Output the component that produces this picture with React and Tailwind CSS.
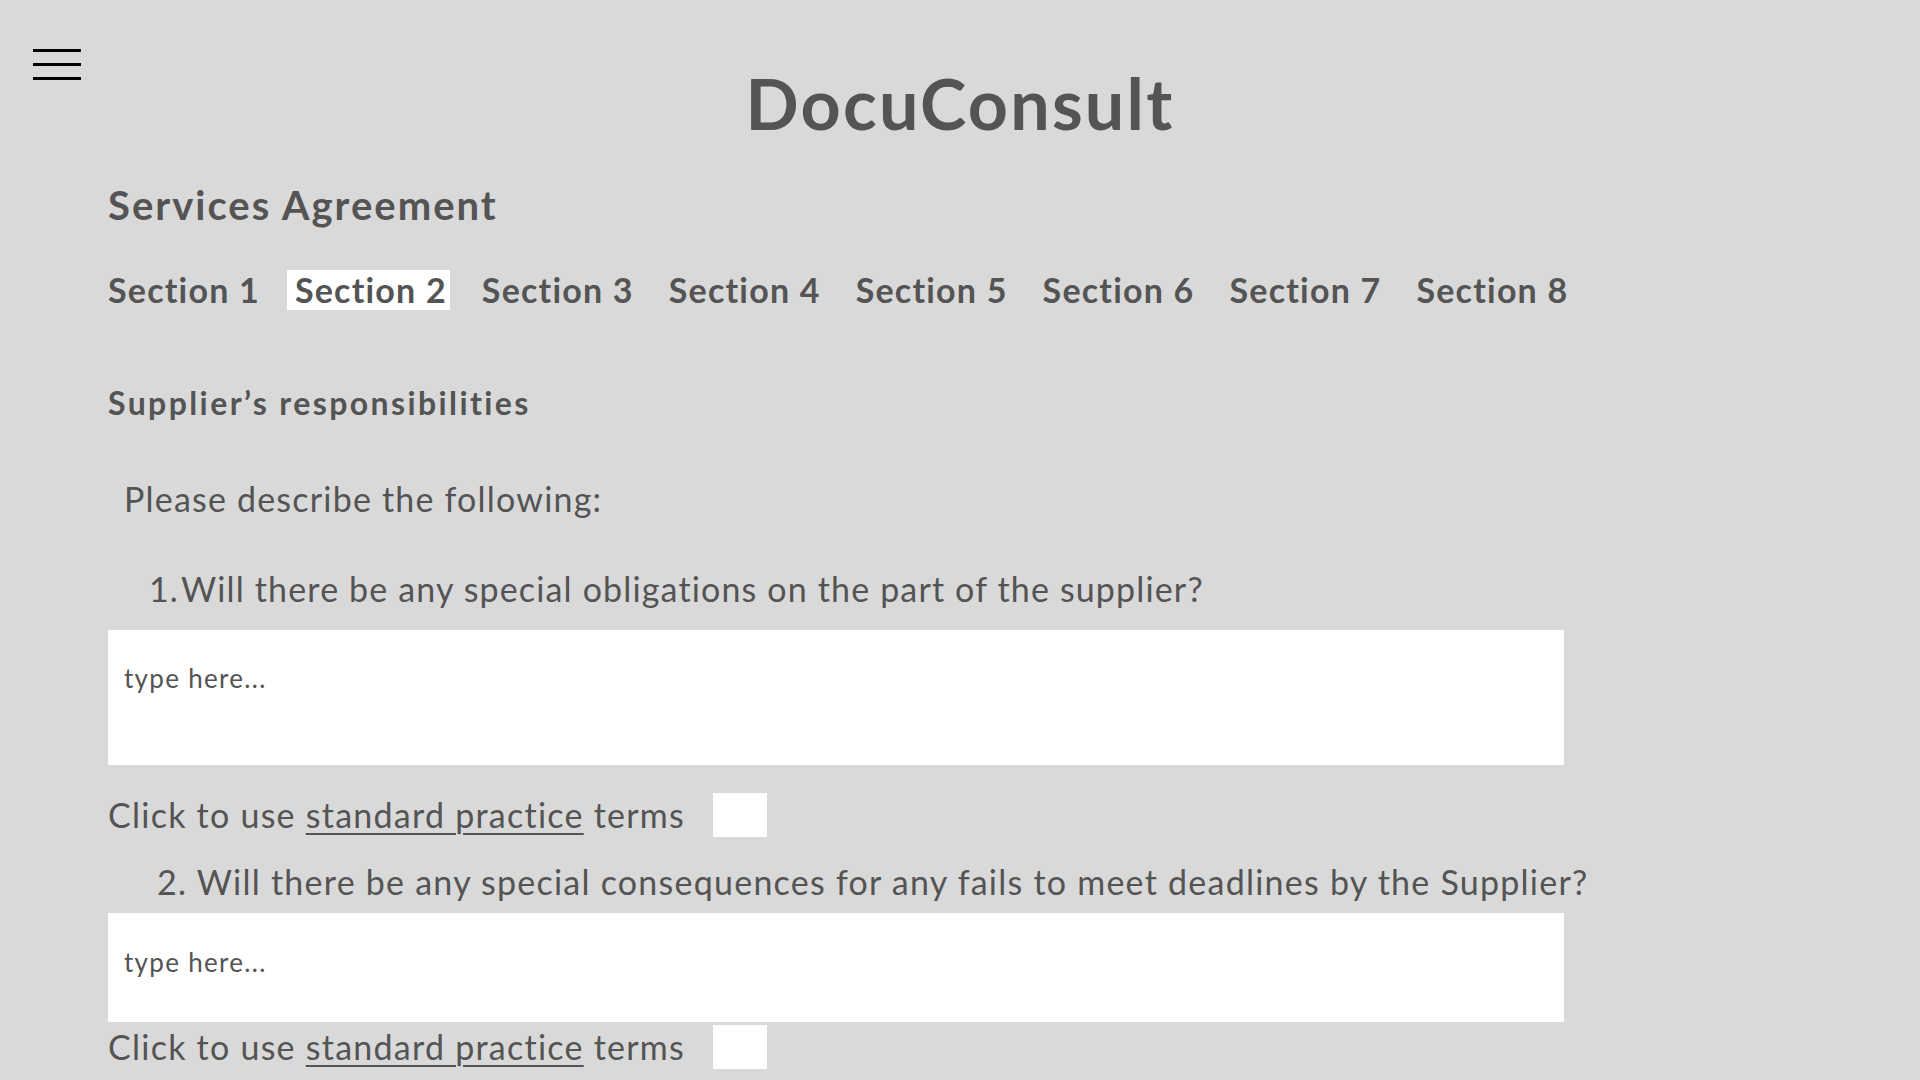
import React from "react";

const sections = ["Section 1", "Section 2", "Section 3", "Section 4", "Section 5", "Section 6", "Section 7", "Section 8"];

const Hamburger = () => (
  <button className="flex flex-col gap-[11px] w-[48px]">
    <span className="block h-[3px] w-full bg-black"></span>
    <span className="block h-[3px] w-full bg-black"></span>
    <span className="block h-[3px] w-full bg-black"></span>
  </button>
);

const StandardTerms = ({ className }) => (
  <div className={"flex items-center " + className}>
    <span className="text-[34px] leading-[44px] tracking-[1.25px]">
      Click to use <span className="underline underline-offset-[5px] decoration-2">standard practice</span> terms
    </span>
    <div className="ml-[28px] w-[54px] h-[44px] bg-white"></div>
  </div>
);

export default function App() {
  return (
    <div
      className="w-full h-[1080px] overflow-hidden bg-[#d9d9d9] text-[#545454]"
      style={{ fontFamily: "Lato, 'Open Sans', sans-serif" }}
    >
      <div className="grid grid-cols-[1fr_auto_1fr]">
        <div className="pl-[33px] pt-[49px]">
          <Hamburger />
        </div>
        <h1 className="pt-[61px] text-[70px] leading-[84px] font-bold tracking-[2.2px]">DocuConsult</h1>
        <div></div>
      </div>

      <div className="pl-[108px]">
        <h2 className="mt-[36px] text-[40px] leading-[48px] font-bold tracking-[2px]">Services Agreement</h2>

        <nav className="mt-[41px] -ml-2 flex gap-[24px]">
          {sections.map((s, i) => (
            <span
              key={s}
              className={
                "pl-2 pr-[3px] text-[34px] leading-[40px] font-bold tracking-[1.2px] " +
                (i === 1 ? "bg-white" : "")
              }
            >
              {s}
            </span>
          ))}
        </nav>

        <h3 className="mt-[73px] text-[32px] leading-[40px] font-bold tracking-[2.4px]">
          Supplier’s responsibilities
        </h3>

        <p className="mt-[56px] pl-4 text-[34px] leading-[40px] tracking-[1.2px]">Please describe the following:</p>

        <ol className="mt-[50px] pl-[41px] text-[34px] leading-[40px] tracking-[1.15px]">
          <li className="flex">
            <span className="w-[32px]">1.</span>
            <span>Will there be any special obligations on the part of the supplier?</span>
          </li>
        </ol>

        <div className="mt-[21px] w-[1456px] h-[135px] bg-white pl-4 pt-[33px]">
          <span className="text-[26px] leading-[30px] tracking-[1.3px]">type here...</span>
        </div>

        <StandardTerms className="mt-[28px]" />

        <p className="mt-[25px] pl-[49px] text-[34px] leading-[40px] tracking-[1.24px]">
          2. Will there be any special consequences for any fails to meet deadlines by the Supplier?
        </p>

        <div className="mt-[11px] w-[1456px] h-[109px] bg-white pl-4 pt-[34px]">
          <span className="text-[26px] leading-[30px] tracking-[1.3px]">type here...</span>
        </div>

        <StandardTerms className="mt-[3px]" />
      </div>
    </div>
  );
}
